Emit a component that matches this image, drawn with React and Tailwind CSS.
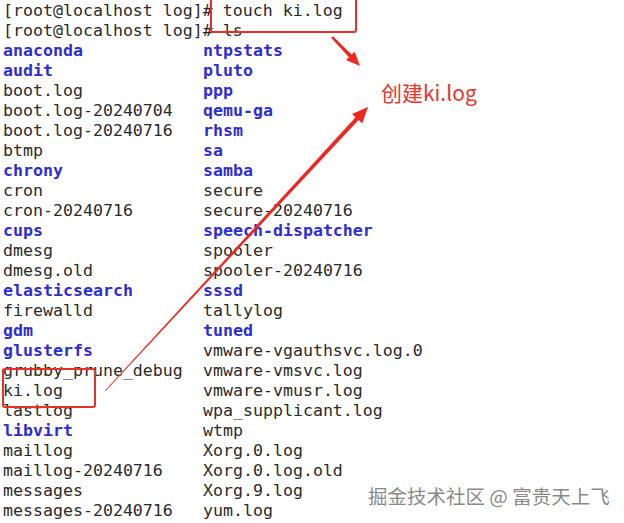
import React from "react";

const rows = [
  [["anaconda", 1], ["ntpstats", 1]],
  [["audit", 1], ["pluto", 1]],
  [["boot.log", 0], ["ppp", 1]],
  [["boot.log-20240704", 0], ["qemu-ga", 1]],
  [["boot.log-20240716", 0], ["rhsm", 1]],
  [["btmp", 0], ["sa", 1]],
  [["chrony", 1], ["samba", 1]],
  [["cron", 0], ["secure", 0]],
  [["cron-20240716", 0], ["secure-20240716", 0]],
  [["cups", 1], ["speech-dispatcher", 1]],
  [["dmesg", 0], ["spooler", 0]],
  [["dmesg.old", 0], ["spooler-20240716", 0]],
  [["elasticsearch", 1], ["sssd", 1]],
  [["firewalld", 0], ["tallylog", 0]],
  [["gdm", 1], ["tuned", 1]],
  [["glusterfs", 1], ["vmware-vgauthsvc.log.0", 0]],
  [["grubby_prune_debug", 0], ["vmware-vmsvc.log", 0]],
  [["ki.log", 0], ["vmware-vmusr.log", 0]],
  [["lastlog", 0], ["wpa_supplicant.log", 0]],
  [["libvirt", 1], ["wtmp", 0]],
  [["maillog", 0], ["Xorg.0.log", 0]],
  [["maillog-20240716", 0], ["Xorg.0.log.old", 0]],
  [["messages", 0], ["Xorg.9.log", 0]],
  [["messages-20240716", 0], ["yum.log", 0]],
];

function Cell({ name, bold }) {
  return (
    <div className={bold ? "font-bold text-[#2d2dd6] whitespace-pre" : "text-[#2a2a2a] whitespace-pre"}>
      {name}
    </div>
  );
}

export default function App() {
  return (
    <div className="relative w-[624px] h-[523px] bg-white overflow-hidden">
      <div
        className="pl-[3px] pt-[1px] text-[16.6px] leading-[20px] text-[#2a2a2a]"
        style={{ fontFamily: '"DejaVu Sans Mono", monospace' }}
      >
        <div className="whitespace-pre">[root@localhost log]# touch ki.log</div>
        <div className="whitespace-pre">[root@localhost log]# ls</div>
        <div className="grid grid-cols-[200px_1fr]">
          {rows.map((r, i) => (
            <React.Fragment key={i}>
              <Cell name={r[0][0]} bold={r[0][1]} />
              <Cell name={r[1][0]} bold={r[1][1]} />
            </React.Fragment>
          ))}
        </div>
      </div>

      {/* annotation boxes */}
      <div className="absolute left-[210px] top-[-3px] w-[147px] h-[36px] border-[2.5px] border-[#e8302a] rounded-[3px]" />
      <div className="absolute left-[2px] top-[368px] w-[94px] h-[40px] border-[2.5px] border-[#e8302a] rounded-[3px]" />

      {/* arrows */}
      <svg className="absolute left-0 top-0" width="624" height="523" viewBox="0 0 624 523">
        <polygon points="331.1,37.8 349.0,57.2 346.0,60.1 360,66 354.6,51.7 351.6,54.6 332.9,36.2" fill="#f0261f" />
        <polygon points="104.8,390.8 355.6,117.3 352.0,113.9 368,107 362.2,123.5 358.6,120.1 105.4,391.2" fill="#f0261f" />
      </svg>

      <div
        className="absolute left-[381px] top-[78px] text-[21px] leading-[28px] text-[#e8352d]"
        style={{ fontFamily: '"Noto Sans CJK SC", "Noto Sans", sans-serif' }}
      >
        创建ki.log
      </div>

      <div
        className="absolute left-[368px] top-[483px] text-[19.5px] leading-[26px] text-[#8a8a8a]"
        style={{ fontFamily: '"Noto Sans CJK SC", sans-serif', textShadow: "0 0 1px #fff" }}
      >
        掘金技术社区 @ 富贵天上飞
      </div>
    </div>
  );
}
